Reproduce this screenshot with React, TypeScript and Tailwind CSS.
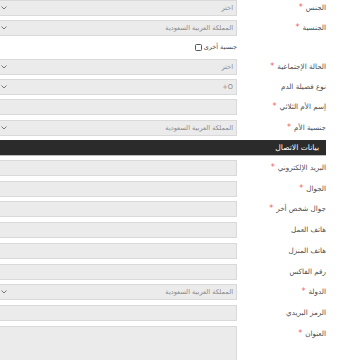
import React from "react";

type Field = {
  label: string;
  required?: boolean;
  kind: "select" | "text" | "area";
  value?: string;
};

const PERSONAL: Field[] = [
  { label: "الجنس", required: true, kind: "select", value: "اختر" },
  { label: "الجنسية", required: true, kind: "select", value: "المملكة العربية السعودية" },
];

const PERSONAL_2: Field[] = [
  { label: "الحالة الإجتماعية", required: true, kind: "select", value: "اختر" },
  { label: "نوع فصيلة الدم", kind: "select", value: "O+" },
  { label: "إسم الأم الثلاثي", required: true, kind: "text" },
  { label: "جنسية الأم", required: true, kind: "select", value: "المملكة العربية السعودية" },
];

const CONTACT: Field[] = [
  { label: "البريد الإلكتروني", required: true, kind: "text" },
  { label: "الجوال", required: true, kind: "text" },
  { label: "جوال شخص أخر", required: true, kind: "text" },
  { label: "هاتف العمل", kind: "text" },
  { label: "هاتف المنزل", kind: "text" },
  { label: "رقم الفاكس", kind: "text" },
  { label: "الدولة", required: true, kind: "select", value: "المملكة العربية السعودية" },
  { label: "الرمز البريدي", kind: "text" },
  { label: "العنوان", required: true, kind: "area" },
];

function Row({ f, loose }: { f: Field; loose?: boolean }) {
  return (
    <div
      className={`flex items-start gap-[9px] pr-[34px] ${
        loose ? "mb-[4.75px]" : "mb-[4.2px]"
      }`}
    >
      <div className="w-[80px] h-[16px] shrink-0 text-[7.2px] leading-[16px] text-[#505050]">
        {f.label}
        {f.required && (
          <span className="text-[#f06060] text-[8px] leading-none mr-[3px]">*</span>
        )}
      </div>
      <div
        className={`relative flex-1 -ml-[4px] border border-[#d9d9d9] bg-[#ebebeb] ${
          f.kind === "area" ? "h-[60px]" : "h-[16px]"
        }`}
      >
        {f.value && (
          <span className="absolute right-[3px] top-0 text-[6.6px] leading-[14px] text-[#8a8a8a]">
            {f.value}
          </span>
        )}
        {f.kind === "select" && (
          <svg
            className="absolute left-[4px] top-[5px]"
            width="6"
            height="4"
            viewBox="0 0 6 4"
          >
            <path d="M0.5 0.5 L3 3 L5.5 0.5" fill="none" stroke="#777" strokeWidth="1" />
          </svg>
        )}
      </div>
    </div>
  );
}

export default function App() {
  return (
    <div
      dir="rtl"
      className="w-[360px] h-[360px] overflow-hidden bg-white"
      style={{ fontFamily: '"DejaVu Sans", sans-serif' }}
    >
      {PERSONAL.map((f) => (
        <Row key={f.label} f={f} />
      ))}
      <div className="flex items-center h-[14.4px] mb-[4.2px] pr-[123px] text-[6.4px] text-[#444]">
        <span>جنسية أخرى</span>
        <span className="inline-block w-[7px] h-[7px] border border-[#555] rounded-[1.5px] mr-[2px]" />
      </div>
      {PERSONAL_2.map((f) => (
        <Row key={f.label} f={f} />
      ))}
      <div className="mr-[34px] -ml-[4px] h-[16px] bg-[#2b2b2b] border-b border-[#bdbdbd] text-white text-[7.6px] leading-[15px] pr-[7px] mb-[4.2px]">
        بيانات الاتصال
      </div>
      {CONTACT.map((f) => (
        <Row key={f.label} f={f} loose />
      ))}
    </div>
  );
}
